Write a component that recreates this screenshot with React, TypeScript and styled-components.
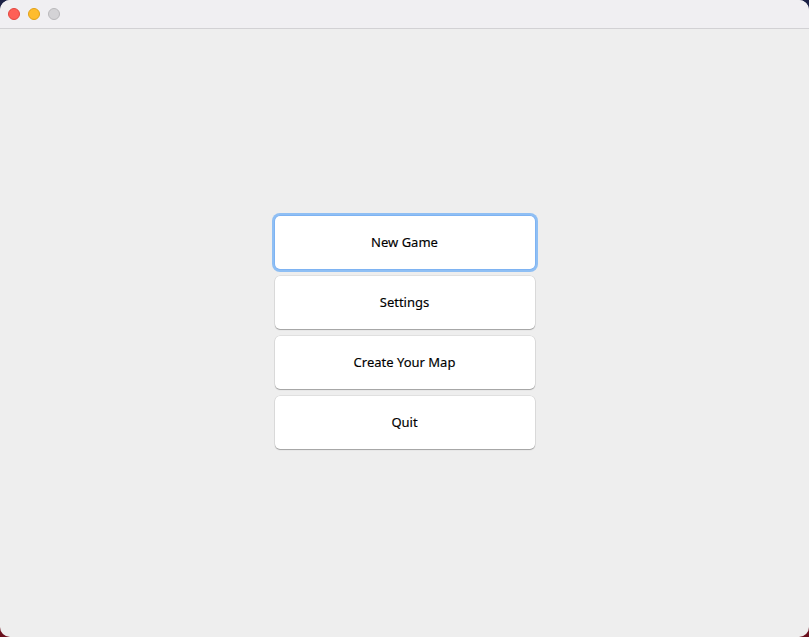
import React from "react";
import styled, { createGlobalStyle } from "styled-components";

const Global = createGlobalStyle`
  html, body { margin: 0; padding: 0; }
  body {
    width: 809px;
    height: 637px;
    overflow: hidden;
    background: linear-gradient(180deg, #1c2247 0%, #3a1a3a 50%, #6a0f1c 100%);
    font-family: "Noto Sans", "Liberation Sans", sans-serif;
  }
`;

const Window = styled.div`
  width: 809px;
  height: 637px;
  border-radius: 10px;
  overflow: hidden;
  background: #eeeeee;
  display: flex;
  flex-direction: column;
`;

const TitleBar = styled.div`
  height: 28px;
  flex: 0 0 28px;
  background: #f0eff2;
  border-bottom: 1px solid #d2d1d4;
  display: flex;
  align-items: center;
  gap: 8px;
  padding-left: 8px;
`;

const Light = styled.span<{ $fill: string; $edge: string }>`
  width: 12px;
  height: 12px;
  border-radius: 50%;
  box-sizing: border-box;
  background: ${(p) => p.$fill};
  border: 0.5px solid ${(p) => p.$edge};
`;

const Content = styled.div`
  flex: 1;
  display: flex;
  align-items: center;
  justify-content: center;
  padding-bottom: 2px;
`;

const Menu = styled.div`
  display: flex;
  flex-direction: column;
  gap: 7px;
  width: 260px;
`;

const MenuButton = styled.button<{ $focused?: boolean }>`
  height: 53px;
  width: 260px;
  margin: 0;
  padding: 0 0 1px;
  border: none;
  border-radius: 5px;
  background: #ffffff;
  color: #000000;
  font-family: "Noto Sans", "Liberation Sans", sans-serif;
  font-size: 13px;
  -webkit-text-stroke: 0.15px #000;
  box-shadow: ${(p) =>
    p.$focused
      ? "0 0 0 0.5px #6fa8f0, 0 0 0 3px #8fbff4"
      : "0 0 0 0.5px rgba(0,0,0,0.12), 0 1px 1px rgba(0,0,0,0.28)"};
  cursor: default;
  outline: none;
`;

export default function App() {
  return (
    <>
      <Global />
      <Window>
        <TitleBar>
          <Light $fill="#fe5f57" $edge="#e2463f" />
          <Light $fill="#febc2e" $edge="#e1a116" />
          <Light $fill="#d4d3d6" $edge="#b9b8bb" />
        </TitleBar>
        <Content>
          <Menu>
            <MenuButton $focused>New Game</MenuButton>
            <MenuButton>Settings</MenuButton>
            <MenuButton>Create Your Map</MenuButton>
            <MenuButton>Quit</MenuButton>
          </Menu>
        </Content>
      </Window>
    </>
  );
}
